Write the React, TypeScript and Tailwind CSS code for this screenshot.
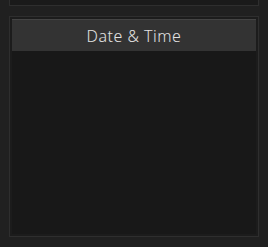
import React from 'react';

const App: React.FC = () => {
  return (
    <div className="w-[268px] h-[247px] bg-[#202020] overflow-hidden flex flex-col px-[9px]">
      {/* Top panel (cut off) */}
      <div className="h-[6px] border-x border-b border-[#2e2e2e] bg-[#1a1a1a]" />

      {/* Date & Time panel */}
      <div className="mt-[10px] h-[221px] border border-[#2e2e2e] bg-[#1c1c1c] p-[2px] flex flex-col">
        <div className="h-[32px] bg-[#333333] border-t border-[#444444] flex items-center justify-center">
          <span className="text-[16px] text-[#e2e2e2] font-['Noto_Sans',sans-serif] font-light tracking-[0.5px]">
            Date &amp; Time
          </span>
        </div>
        <div className="flex-1 bg-[#181818]" />
      </div>
    </div>
  );
};

export default App;
